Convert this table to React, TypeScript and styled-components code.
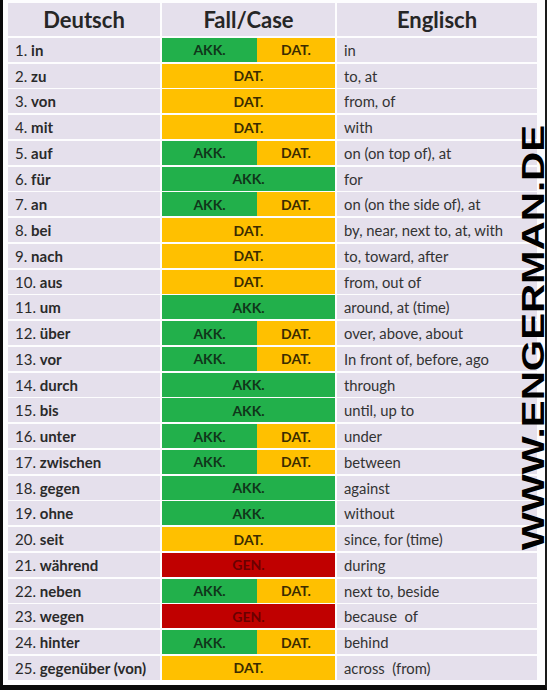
import React from 'react';
import styled, { createGlobalStyle } from 'styled-components';

type Case = 'akk' | 'dat' | 'gen' | 'both';

interface Row {
  word: string;
  kase: Case;
  english: string;
}

const rows: Row[] = [
  { word: 'in', kase: 'both', english: 'in' },
  { word: 'zu', kase: 'dat', english: 'to, at' },
  { word: 'von', kase: 'dat', english: 'from, of' },
  { word: 'mit', kase: 'dat', english: 'with' },
  { word: 'auf', kase: 'both', english: 'on (on top of), at' },
  { word: 'für', kase: 'akk', english: 'for' },
  { word: 'an', kase: 'both', english: 'on (on the side of), at' },
  { word: 'bei', kase: 'dat', english: 'by, near, next to, at, with' },
  { word: 'nach', kase: 'dat', english: 'to, toward, after' },
  { word: 'aus', kase: 'dat', english: 'from, out of' },
  { word: 'um', kase: 'akk', english: 'around, at (time)' },
  { word: 'über', kase: 'both', english: 'over, above, about' },
  { word: 'vor', kase: 'both', english: 'In front of, before, ago' },
  { word: 'durch', kase: 'akk', english: 'through' },
  { word: 'bis', kase: 'akk', english: 'until, up to' },
  { word: 'unter', kase: 'both', english: 'under' },
  { word: 'zwischen', kase: 'both', english: 'between' },
  { word: 'gegen', kase: 'akk', english: 'against' },
  { word: 'ohne', kase: 'akk', english: 'without' },
  { word: 'seit', kase: 'dat', english: 'since, for (time)' },
  { word: 'während', kase: 'gen', english: 'during' },
  { word: 'neben', kase: 'both', english: 'next to, beside' },
  { word: 'wegen', kase: 'gen', english: 'because\u00a0 of' },
  { word: 'hinter', kase: 'both', english: 'behind' },
  { word: 'gegenüber (von)', kase: 'dat', english: 'across\u00a0 (from)' },
];

const caseStyle = {
  akk: { bg: '#22b04b', fg: '#10361a', label: 'AKK.' },
  dat: { bg: '#ffc000', fg: '#3b2c00', label: 'DAT.' },
  gen: { bg: '#c00000', fg: '#6a0000', label: 'GEN.' },
};

const App = () => {
  return (
    <>
      <GlobalStyle />
      <Frame>
        <Table>
          <HeadCell>Deutsch</HeadCell>
          <HeadCell>Fall/Case</HeadCell>
          <HeadCell>Englisch</HeadCell>
          {rows.map((r, i) => (
            <React.Fragment key={r.word}>
              <WordCell>
                {i + 1}. <b>{r.word}</b>
              </WordCell>
              {r.kase === 'both' ? (
                <SplitCell>
                  <CaseBox $kase="akk">AKK.</CaseBox>
                  <CaseBox $kase="dat">DAT.</CaseBox>
                </SplitCell>
              ) : (
                <CaseBox $kase={r.kase}>{caseStyle[r.kase].label}</CaseBox>
              )}
              <EnglishCell>{r.english}</EnglishCell>
            </React.Fragment>
          ))}
        </Table>
        <WatermarkBox>
          <Watermark>WWW.ENGERMAN.DE</Watermark>
        </WatermarkBox>
      </Frame>
    </>
  );
};

export default App;

const GlobalStyle = createGlobalStyle`
  html, body {
    margin: 0;
    padding: 0;
    background: #fff;
  }
`;

const Frame = styled.div`
  position: relative;
  box-sizing: border-box;
  width: 547px;
  height: 690px;
  padding: 3px 8px 4px 5px;
  background: #fdfdfe;
  border-left: 3px solid #0a0a0a;
  border-right: 2px solid #1a1a1a;
  border-bottom: 5px solid #0a0a0a;
  font-family: Lato, 'Open Sans', sans-serif;
`;

const Table = styled.div`
  display: grid;
  grid-template-columns: 152px 173px 200px;
  grid-template-rows: 33px;
  grid-auto-rows: 24px;
  column-gap: 2px;
  row-gap: 1.75px;
`;

const Cell = styled.div`
  display: flex;
  align-items: center;
  background: #e5e0ec;
  color: #2a2a2a;
  font-size: 15px;
  white-space: nowrap;
`;

const HeadCell = styled(Cell)`
  justify-content: center;
  font-size: 22px;
  font-weight: 700;
  color: #262626;
`;

const WordCell = styled(Cell)`
  padding-left: 7px;
  white-space: pre;
  b {
    font-weight: 700;
  }
`;

const EnglishCell = styled(Cell)`
  padding-left: 7px;
  color: #333;
  font-size: 14.8px;
`;

const SplitCell = styled.div`
  display: grid;
  grid-template-columns: 95px 78px;
`;

const CaseBox = styled.div<{ $kase: 'akk' | 'dat' | 'gen' }>`
  display: flex;
  align-items: center;
  justify-content: center;
  background: ${({ $kase }) => caseStyle[$kase].bg};
  color: ${({ $kase }) => caseStyle[$kase].fg};
  font-size: 14px;
  font-weight: 700;
`;

const WatermarkBox = styled.div`
  position: absolute;
  left: 516px;
  top: 122px;
  width: 30px;
  height: 431px;
  display: flex;
  align-items: center;
  justify-content: center;
`;

const Watermark = styled.span`
  writing-mode: vertical-rl;
  transform: rotate(180deg) scaleY(1.3);
  font-family: 'Liberation Sans', Arial, sans-serif;
  font-size: 31px;
  font-weight: 700;
  line-height: 30px;
  color: #000;
  white-space: nowrap;
`;
